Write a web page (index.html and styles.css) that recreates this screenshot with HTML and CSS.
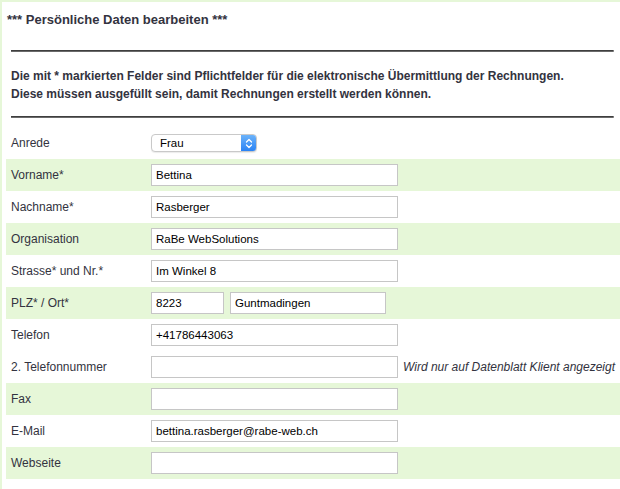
FILE: index.html
```html
<!DOCTYPE html>
<html lang="de">
<head>
<meta charset="utf-8">
<title>Persönliche Daten bearbeiten</title>
<link rel="stylesheet" href="styles.css">
</head>
<body>
<div class="page">
  <h1 class="title">*** Persönliche Daten bearbeiten ***</h1>
  <hr class="rule rule-top">
  <p class="intro">Die mit * markierten Felder sind Pflichtfelder für die elektronische Übermittlung der Rechnungen.<br>Diese müssen ausgefüllt sein, damit Rechnungen erstellt werden können.</p>
  <hr class="rule rule-bottom">
  <div class="form">
    <div class="row">
      <div class="label">Anrede</div>
      <div class="field">
        <div class="select">
          <span class="select-value">Frau</span>
          <span class="select-btn">
            <svg width="8" height="11" viewBox="0 0 8 11"><path d="M1.5 4 L4 1.5 L6.5 4 M1.5 7 L4 9.5 L6.5 7" fill="none" stroke="#fff" stroke-width="1.3" stroke-linecap="round" stroke-linejoin="round"/></svg>
          </span>
        </div>
      </div>
    </div>
    <div class="row alt">
      <div class="label">Vorname*</div>
      <div class="field"><input class="input" type="text" value="Bettina"></div>
    </div>
    <div class="row">
      <div class="label">Nachname*</div>
      <div class="field"><input class="input" type="text" value="Rasberger"></div>
    </div>
    <div class="row alt">
      <div class="label">Organisation</div>
      <div class="field"><input class="input" type="text" value="RaBe WebSolutions"></div>
    </div>
    <div class="row">
      <div class="label">Strasse* und Nr.*</div>
      <div class="field"><input class="input" type="text" value="Im Winkel 8"></div>
    </div>
    <div class="row alt">
      <div class="label">PLZ* / Ort*</div>
      <div class="field pair">
        <input class="input plz" type="text" value="8223">
        <input class="input ort" type="text" value="Guntmadingen">
      </div>
    </div>
    <div class="row">
      <div class="label">Telefon</div>
      <div class="field"><input class="input" type="text" value="+41786443063"></div>
    </div>
    <div class="row">
      <div class="label">2. Telefonnummer</div>
      <div class="field"><input class="input" type="text" value=""></div>
      <div class="note">Wird nur auf Datenblatt Klient angezeigt</div>
    </div>
    <div class="row alt">
      <div class="label">Fax</div>
      <div class="field"><input class="input" type="text" value=""></div>
    </div>
    <div class="row">
      <div class="label">E-Mail</div>
      <div class="field"><input class="input" type="text" value="bettina.rasberger@rabe-web.ch"></div>
    </div>
    <div class="row alt">
      <div class="label">Webseite</div>
      <div class="field"><input class="input" type="text" value=""></div>
    </div>
  </div>
</div>
</body>
</html>
```
FILE: styles.css
```css
html, body {
  margin: 0;
  padding: 0;
  background: #e6f7d8;
  overflow: hidden;
}
body {
  font-family: "Liberation Sans", Arial, Helvetica, sans-serif;
  color: #333340;
}
.page {
  margin: 2px 0 0 2px;
  background: #fff;
  min-height: 487px;
  padding: 0 0 0 0;
}
.title {
  margin: 0;
  padding: 10px 0 0 5px;
  font-size: 13px;
  font-weight: bold;
  line-height: 16px;
}
.rule {
  height: 0;
  margin: 0 6px 0 9px;
  border: 0;
  border-top: 1px solid #3f3f3f;
  border-bottom: 1px solid #6a6a6a;
  border-right: 1px solid #b5b5b5;
}
.rule-top {
  margin-top: 22px;
}
.intro {
  margin: 15px 0 0 9px;
  font-size: 12px;
  font-weight: bold;
  line-height: 18px;
}
.rule-bottom {
  margin-top: 13px;
}
.form {
  margin: 9px 0 0 4px;
}
.row {
  display: grid;
  grid-template-columns: 145px auto 1fr;
  align-items: center;
  height: 32px;
}
.row.alt {
  background: #e6f7d8;
}
.label {
  padding-left: 5px;
  font-size: 12px;
  white-space: nowrap;
}
.field {
  display: flex;
  gap: 6px;
}
.input {
  box-sizing: border-box;
  width: 247px;
  height: 22px;
  margin: 0;
  padding: 0 4px;
  border: 1px solid #c6c6c6;
  background: #fff;
  font-family: "Liberation Sans", Arial, Helvetica, sans-serif;
  font-size: 11.5px;
  color: #000;
  outline: none;
}
.input.plz {
  width: 73px;
}
.input.ort {
  width: 156px;
}
.note {
  padding-left: 5px;
  font-size: 12px;
  font-style: italic;
  white-space: nowrap;
}
.select {
  box-sizing: border-box;
  display: flex;
  align-items: center;
  width: 106px;
  height: 18px;
  border: 1px solid #c9c9c9;
  border-radius: 4px;
  background: #fff;
  overflow: hidden;
  box-shadow: 0 1px 1px rgba(0,0,0,0.08);
}
.select-value {
  flex: 1;
  padding-left: 8px;
  font-size: 11.5px;
  color: #000;
}
.select-btn {
  display: flex;
  align-items: center;
  justify-content: center;
  width: 15px;
  height: 100%;
  background: linear-gradient(#6cb3fa, #2a83f5);
}
```
